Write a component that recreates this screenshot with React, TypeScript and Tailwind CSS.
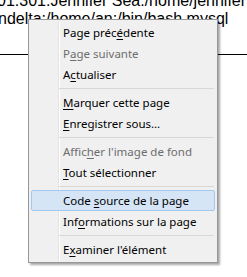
import { Fragment } from 'react';

type Item = { label: string; key: number; disabled?: boolean; active?: boolean } | 'sep';

// label with the access key underlined, key = index of the letter
const items: Item[] = [
  { label: 'Page précédente', key: 9 },
  { label: 'Page suivante', key: 1, disabled: true },
  { label: 'Actualiser', key: 1 },
  'sep',
  { label: 'Marquer cette page', key: 0 },
  { label: 'Enregistrer sous…', key: 0 },
  'sep',
  { label: "Afficher l'image de fond", key: 5, disabled: true },
  { label: 'Tout sélectionner', key: 0 },
  'sep',
  { label: 'Code source de la page', key: 5, active: true },
  { label: 'Informations sur la page', key: 3 },
  'sep',
  { label: "Examiner l'élément", key: 1 },
];

const Label = ({ text, k }: { text: string; k: number }) => (
  <span>
    {text.slice(0, k)}
    <span className="underline underline-offset-[2px]">{text[k]}</span>
    {text.slice(k + 1)}
  </span>
);

const ContextMenu = () => {
  return (
    <div className="absolute left-[28px] top-[19px] w-[190px] border border-[#979797] bg-[#f0f0f0] px-[2px] pt-[2px] pb-[2px] shadow-[2px_2px_2px_rgba(0,0,0,0.35)] font-['Noto_Sans',sans-serif] text-[11.5px] leading-[21px]">
      {/* gutter line */}
      <div className="absolute left-[29px] top-[1px] bottom-[1px] w-px bg-[#e2e3e3]" />
      <div className="absolute left-[30px] top-[1px] bottom-[1px] w-px bg-white" />
      <ul className="relative">
        {items.map((it, i) =>
          it === 'sep' ? (
            <li key={i} className="flex h-[7px] items-center pl-[28px] pr-[1px]">
              <div className="h-px w-full bg-[#d7d7d7]" />
            </li>
          ) : (
            <Fragment key={i}>
              <li
                className={
                  it.active
                    ? 'flex h-[21px] items-center rounded-[2px] border border-[#a3c9ef] bg-[#d5e5f6] pl-[31px] text-black'
                    : it.disabled
                    ? 'flex h-[21px] items-center pl-[32px] text-[#6d6d6d]'
                    : 'flex h-[21px] items-center pl-[32px] text-black'
                }
              >
                <Label text={it.label} k={it.key} />
              </li>
            </Fragment>
          )
        )}
      </ul>
    </div>
  );
};

export default function App() {
  return (
    <div className="relative h-[277px] w-[247px] overflow-hidden bg-white">
      <div className="-ml-[3px] -mt-[8px] whitespace-nowrap font-['Liberation_Sans',Arial,sans-serif] text-[16px] leading-[18px] text-black">
        <div>01:301:Jennifer Sea:/home/jennifer:</div>
        <div className="ml-[1px]">ndelta:/home/an:/bin/bash mysql</div>
      </div>
      <div className="mt-[26px] h-px w-full bg-black" />
      <ContextMenu />
    </div>
  );
}
